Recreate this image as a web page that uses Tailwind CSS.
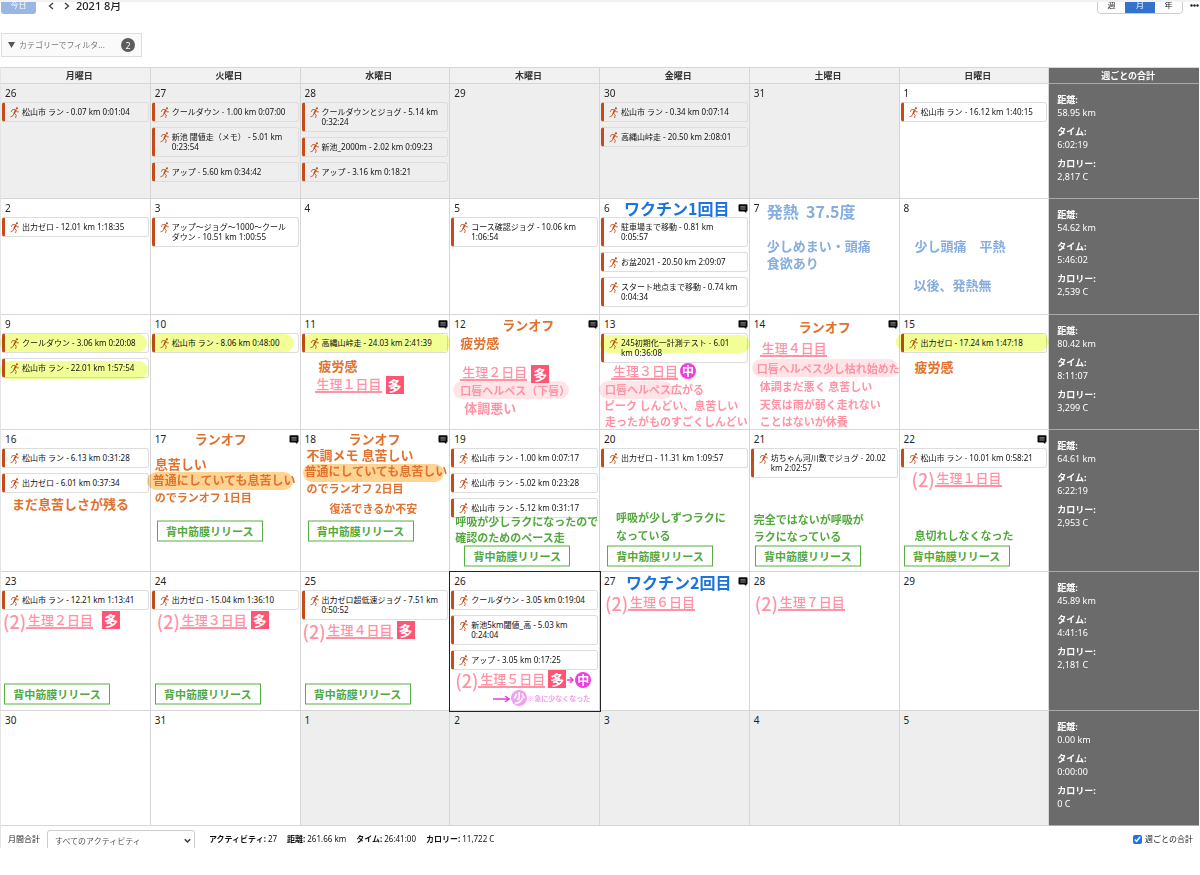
<!DOCTYPE html>
<html lang="ja">
<head>
<meta charset="utf-8">
<meta name="viewport" content="width=device-width, initial-scale=1">
<title>2021 8月 カレンダー</title>
<script src="https://cdn.jsdelivr.net/npm/@tailwindcss/browser@4"></script>
</head>
<body class="bg-white font-['Noto_Sans','Noto_Sans_CJK_JP',sans-serif] text-[8px] text-[#222]">
<svg class="hidden" aria-hidden="true">
  <symbol id="runner" viewBox="0 0 27 34">
    <circle cx="21" cy="4" r="3.4" fill="#c24d1b"/>
    <path d="M17 10L13 19" fill="none" stroke="#c24d1b" stroke-width="5" stroke-linecap="round"/>
    <path d="M15 8H7L4 14M18 10l3 5 5 0M13 20l6 5-2 8M12 20l-3 7-7 3" fill="none" stroke="#c24d1b" stroke-width="2.6" stroke-linecap="round" stroke-linejoin="round"/>
  </symbol>
  <symbol id="memo" viewBox="0 0 30 28">
    <path d="M4 1h22q3 0 3 3v16q0 3-3 3h-1v5l-6-5H4q-3 0-3-3V4q0-3 3-3z" fill="#0a0a0a"/>
    <path d="M7 8h16M7 12h16M7 16h16" stroke="#aaa" stroke-width="2"/>
  </symbol>
</svg>

<header class="flex h-[14px] items-end overflow-hidden border-t-2 border-[#f2f2f2] pl-px">
  <button class="h-[19px] w-[35px] shrink-0 rounded-b-[3px] bg-[#9ab7e4] leading-none text-white">今日</button>
  <button class="ml-3 flex h-[16px] w-[6px] items-center" aria-label="前の月"><svg class="h-2 w-[6px]" viewBox="0 0 6 8" fill="none" stroke="#444" stroke-width="1.4"><path d="M5 1L1.500 4 5 7"/></svg></button>
  <button class="ml-[10px] flex h-[16px] w-[6px] items-center" aria-label="次の月"><svg class="h-2 w-[6px]" viewBox="0 0 6 8" fill="none" stroke="#444" stroke-width="1.4"><path d="M1 1L4.500 4 1 7"/></svg></button>
  <h1 class="ml-1.5 text-[11px] leading-[16px] font-medium">2021 8月</h1>
  <div class="ml-auto flex h-[19px] w-[86px] overflow-hidden rounded-b-[4px] border border-[#ccc] leading-none">
    <button class="flex-1">週</button>
    <button class="w-[30px] bg-[#3472cd] text-white">月</button>
    <button class="flex-1">年</button>
  </div>
  <button class="mr-px ml-[7px] flex h-[18px] w-[9px] items-center" aria-label="その他"><svg class="h-[3px] w-[9px]" viewBox="0 0 9 3" fill="#222"><circle cx="1.500" cy="1.500" r="1.200"/><circle cx="4.500" cy="1.500" r="1.200"/><circle cx="7.500" cy="1.500" r="1.200"/></svg></button>
</header>

<button class="mt-[19px] ml-px flex h-6 w-[141px] items-center border border-[#ddd] bg-[#fafafa] px-[6px] text-[#777]">
  <svg class="mr-1 h-[6px] w-[7px]" viewBox="0 0 7 6"><path d="M0 0h7L3.500 6z" fill="#555"/></svg>
  <span>カテゴリーでフィルタ...</span>
  <span class="ml-auto grid size-[14px] place-items-center rounded-full bg-[#5c5c5c] text-[9px] leading-none text-white">2</span>
</button>

<main class="mt-[10px] border-l border-[#e4e4e4] pr-px">
  <table class="w-full table-fixed border-separate border-spacing-0 border-t border-[#d6d6d6]">
    <thead class="text-[9px] leading-none text-[#333]">
      <tr id="days"></tr>
    </thead>
    <tbody id="weeks"></tbody>
  </table>
  <footer class="flex h-[22px] items-start overflow-hidden pr-[6px] pl-[7px] leading-[26px]">
    <label for="kind">月間合計</label>
    <div class="relative mt-1 ml-[7px]">
      <select id="kind" class="block h-[21px] w-[148px] appearance-none rounded-[3px] border border-[#ccc] bg-white pl-[7px] text-[8px] leading-[18px] text-[#555]"><option>すべてのアクティビティ</option></select>
      <svg class="pointer-events-none absolute top-2 right-1 h-[6px] w-[7px]" viewBox="0 0 7 6" fill="none" stroke="#333" stroke-width="1.400"><path d="M.8 1.200L3.500 4 6.200 1.200"/></svg>
    </div>
    <dl class="ml-[14px] flex gap-[10px] text-[#111]">
      <div class="flex gap-0.5"><dt class="font-bold">アクティビティ:</dt><dd>27</dd></div>
      <div class="flex gap-0.5"><dt class="font-bold">距離:</dt><dd>261.66 km</dd></div>
      <div class="flex gap-0.5"><dt class="font-bold">タイム:</dt><dd>26:41:00</dd></div>
      <div class="flex gap-0.5"><dt class="font-bold">カロリー:</dt><dd>11,722 C</dd></div>
    </dl>
    <label class="ml-auto flex items-center gap-[3px]"><input type="checkbox" checked class="size-[9px] accent-[#1a73e8]">週ごとの合計</label>
  </footer>
</main>

<script>
// Pen styles for the memos written on the calendar.
const pens = {
  blue: 'text-[16px] text-[#1a73e0] font-bold',
  sky: 'text-[16px] text-[#86ade0] font-bold',
  skyS: 'text-[13px] text-[#86ade0] font-bold',
  orange: 'text-[13px] text-[#e0722e] font-bold',
  orangeM: 'text-[12px] text-[#e0722e] font-bold',
  orangeS: 'text-[11px] text-[#e0722e] font-bold',
  green: 'text-[11px] text-[#51a83c] font-bold',
  pink: 'text-[13px] text-[#ff93a5] font-bold',
  pinkS: 'text-[11px] text-[#ff93a5] font-bold',
  line: 'text-[13px] text-[#ff93a5] font-medium border-b-2 border-[#ff93a5] pl-0.5 pb-px',
  box: 'text-[11px] text-[#51a83c] font-bold border border-[#55b040] bg-white py-1 w-[106px] text-center',
  many: 'text-[14px] text-white font-bold bg-[#ff5575] p-0.5',
  mid: 'text-[12px] text-white font-bold bg-[#f03ee0] rounded-full p-0.5',
  few: 'text-[12px] text-white font-bold bg-[#f0a0f0] rounded-full p-0.5',
  tiny: 'text-[7px] text-[#f2a0ee] font-bold',
};
const markers = {
  yellow: 'bg-[#f2ff96]',
  amber: 'bg-[#ffd391]',
  rose: 'bg-[#ffe5e8]',
};
const R = '背中筋膜リリース';
// note: [pen, x, centre y, text]   mark: [marker, x, y, width]
const weeks = [
 { h: 'h-[115px]', sum: ['58.95 km','6:02:19','2,817 C'], days: [
  { n:26, off:1, a:['松山市 ラン - 0.07 km 0:01:04'] },
  { n:27, off:1, a:['クールダウン - 1.00 km 0:07:00','新池 閾値走（メモ） - 5.01 km 0:23:54','アップ - 5.60 km 0:34:42'] },
  { n:28, off:1, a:['クールダウンとジョグ - 5.14 km 0:32:24','新池_2000m - 2.02 km 0:09:23','アップ - 3.16 km 0:18:21'] },
  { n:29, off:1 },
  { n:30, off:1, a:['松山市 ラン - 0.34 km 0:07:14','高縄山峠走 - 20.50 km 2:08:01'] },
  { n:31, off:1 },
  { n:1, a:['松山市 ラン - 16.12 km 1:40:15'] } ] },
 { h: 'h-[116px]', sum: ['54.62 km','5:46:02','2,539 C'], days: [
  { n:2, a:['出力ゼロ - 12.01 km 1:18:35'] },
  { n:3, a:['アップ〜ジョグ〜1000〜クールダウン - 10.51 km 1:00:55'] },
  { n:4 },
  { n:5, a:['コース確認ジョグ - 10.06 km 1:06:54'] },
  { n:6, memo:1, a:['駐車場まで移動 - 0.81 km 0:05:57','お盆2021 - 20.50 km 2:09:07','スタート地点まで移動 - 0.74 km 0:04:34'], t:[['blue',24,9,'ワクチン1回目']] },
  { n:7, t:[['sky',17,12,'発熱\u00a0 37.5度'],['skyS',17,46,'少しめまい・頭痛'],['skyS',17,63,'食欲あり']] },
  { n:8, t:[['skyS',15,46,'少し頭痛　平熱'],['skyS',14,85,'以後、発熱無']] } ] },
 { h: 'h-[115px]', sum: ['80.42 km','8:11:07','3,299 C'], days: [
  { n:9, a:['クールダウン - 3.06 km 0:20:08','松山市 ラン - 22.01 km 1:57:54'], m:[['yellow',-1,19,147],['yellow',-1,46,148]] },
  { n:10, a:['松山市 ラン - 8.06 km 0:48:00'], m:[['yellow',-1,19,144]] },
  { n:11, memo:1, a:['高縄山峠走 - 24.03 km 2:41:39'], m:[['yellow',1,19,149]], t:[['orange',18,50,'疲労感'],['line',14,70,'生理１日目'],['many',85,70,'多']] },
  { n:12, memo:1, m:[['rose',3,66,116]], t:[['orange',52,9,'ランオフ'],['orange',10,27,'疲労感'],['line',10,58,'生理２日目'],['many',81,59,'多'],['pinkS',10,75,'口唇ヘルペス（下唇）'],['pink',14,92,'体調悪い']] },
  { n:13, memo:1, a:['245初期化一計測テスト - 6.01 km 0:36:08'], m:[['yellow',0,20,150],['rose',-1,66,74]], t:[['line',11,57,'生理３日目'],['mid',80,56,'中'],['pinkS',5,74,'口唇ヘルペス広がる'],['pinkS',4,90,'ピーク しんどい、息苦しい'],['pinkS',5,106,'走ったがものすごくしんどい']] },
  { n:14, memo:1, m:[['rose',2,44,146]], t:[['orange',49,11,'ランオフ'],['line',10,34,'生理４日目'],['pinkS',7,53,'口唇ヘルペス少し枯れ始めた'],['pinkS',10,71,'体調まだ悪く 息苦しい'],['pinkS',10,89,'天気は雨が弱く走れない'],['pinkS',10,106,'ことはないが休養']] },
  { n:15, a:['出力ゼロ - 17.24 km 1:47:18'], m:[['yellow',-4,18,153]], t:[['orange',15,51,'疲労感']] } ] },
 { h: 'h-[142px]', sum: ['64.61 km','6:22:19','2,953 C'], days: [
  { n:16, a:['松山市 ラン - 6.13 km 0:31:28','出力ゼロ - 6.01 km 0:37:34'], t:[['orange',11,73,'まだ息苦しさが残る']] },
  { n:17, memo:1, m:[['amber',-4,42,146]], t:[['orange',44,8,'ランオフ'],['orange',4,33,'息苦しい'],['orangeM',2,50,'普通にしていても息苦しい'],['orangeS',4,67,'のでランオフ 1日目'],['box',6,101,R]] },
  { n:18, memo:1, m:[['amber',2,34,141]], t:[['orange',48,8,'ランオフ'],['orange',6,24,'不調メモ 息苦しい'],['orangeM',4,41,'普通にしていても息苦しい'],['orangeS',6,58,'のでランオフ 2日目'],['orangeS',29,78,'復活できるか不安'],['box',7,101,R]] },
  { n:19, a:['松山市 ラン - 1.00 km 0:07:17','松山市 ラン - 5.02 km 0:23:28','松山市 ラン - 5.12 km 0:31:17'], t:[['green',5,91,'呼吸が少しラクになったので'],['green',5,107,'確認のためのペース走'],['box',14,126,R]] },
  { n:20, a:['出力ゼロ - 11.31 km 1:09:57'], t:[['green',16,87,'呼吸が少しずつラクに'],['green',16,105,'なっている'],['box',7,126,R]] },
  { n:21, a:['坊ちゃん河川敷でジョグ - 20.02 km 2:02:57'], t:[['green',4,89,'完全ではないが呼吸が'],['green',4,106,'ラクになっている'],['box',5,126,R]] },
  { n:22, memo:1, a:['松山市 ラン - 10.01 km 0:58:21'], t:[['sub',12,49,'生理１日目'],['green',15,105,'息切れしなくなった'],['box',4,126,R]] } ] },
 { h: 'h-[139px]', sum: ['45.89 km','4:41:16','2,181 C'], days: [
  { n:23, a:['松山市 ラン - 12.21 km 1:13:41'], t:[['sub',2,49,'生理２日目'],['many',101,48,'多'],['box',3,122,R]] },
  { n:24, a:['出力ゼロ - 15.04 km 1:36:10'], t:[['sub',6,49,'生理３日目'],['many',100,48,'多'],['box',4,122,R]] },
  { n:25, a:['出力ゼロ超低速ジョグ - 7.51 km 0:50:52'], t:[['sub',2,59,'生理４日目'],['many',96,58,'多'],['box',4,122,R]] },
  { n:26, today:1, a:['クールダウン - 3.05 km 0:19:04','新池5km閾値_高 - 5.03 km 0:24:04','アップ - 3.05 km 0:17:25'], t:[['sub',5,108,'生理５日目'],['many',98,107,'多'],['arrowS',117,108,''],['mid',125,108,'中'],['arrowL',43,127,''],['few',61,126,'少'],['tiny',77,126,'※急に少なくなった']] },
  { n:27, memo:1, t:[['blue',26,10,'ワクチン2回目'],['sub',5,31,'生理６日目']] },
  { n:28, t:[['sub',5,31,'生理７日目']] },
  { n:29 } ] },
 { h: 'h-[115px]', sum: ['0.00 km','0:00:00','0 C'], days: [
  { n:30 }, { n:31 }, { n:1, off:1 }, { n:2, off:1 }, { n:3, off:1 }, { n:4, off:1 }, { n:5, off:1 } ] },
];

const activity = (text) => `<li><a href="#" class="flex rounded-[3px] border border-l-3 border-[#ddd] border-l-[#c24d1b] py-1 pr-[7px] pl-[5px] leading-[10px]"><svg class="-mb-px mr-[3px] h-[11px] w-[9px] shrink-0" aria-hidden="true"><use href="#runner"/></svg><span>${text}</span></a></li>`;
const mark = ([pen, x, y, w]) => `<span class="pointer-events-none absolute h-[18px] rounded-full mix-blend-multiply ${markers[pen]}" style="left:${x}px;top:${y}px;width:${w}px"></span>`;
const note = ([pen, x, y, text]) => {
  const at = `style="left:${x}px;top:${y}px"`;
  if (pen === 'sub') return `<p class="absolute flex -translate-y-1/2 items-center font-['Noto_Sans_CJK_JP',sans-serif] leading-none whitespace-nowrap" ${at}><span class="text-[18px] font-medium text-[#ff93a5]">(2)</span><span class="${pens.line}">${text}</span></p>`;
  if (pen === 'arrowS') return `<svg class="absolute h-[7px] w-[7px] -translate-y-1/2" ${at} viewBox="0 0 7 7" fill="none" stroke="#e83edc" stroke-width="1.500"><path d="M0 3.500H6M3 .5L6 3.500 3 6.500"/></svg>`;
  if (pen === 'arrowL') return `<svg class="absolute h-[7px] w-[17px] -translate-y-1/2" ${at} viewBox="0 0 17 7" fill="none" stroke="#e83edc" stroke-width="1.500"><path d="M0 3.500H16M12 .5L16 3.500 12 6.500"/></svg>`;
  return `<p class="absolute -translate-y-1/2 font-['Noto_Sans_CJK_JP',sans-serif] leading-none whitespace-nowrap ${pens[pen]}" ${at}>${text}</p>`;
};
const day = (d) => `<td class="relative border-r border-b border-[#d6d6d6] p-0 align-top ${d.off ? 'bg-[#eee]' : 'bg-white'} ${d.today ? 'outline-1 outline-[#222] z-10' : ''}">
  <div class="flex h-[18px] items-center justify-between pr-px pl-1 text-[10px] leading-none"><time>${d.n}</time>${d.memo ? '<svg class="h-[9px] w-[10px]" role="img" aria-label="メモ"><use href="#memo"/></svg>' : ''}</div>
  <ul class="flex flex-col gap-[5px] pr-px pl-px text-[#111]">${(d.a || []).map(activity).join('')}</ul>
  ${(d.m || []).map(mark).join('')}${(d.t || []).map(note).join('')}</td>`;
const total = (s) => `<td class="border-b border-[#aaa] bg-[#6b6b6b] p-0 align-top text-[9px] text-white"><dl class="pt-[9px] pl-[8px] leading-[13px]">${['距離:','タイム:','カロリー:'].map((k, i) => `<div class="mb-1.5"><dt class="font-bold">${k}</dt><dd>${s[i]}</dd></div>`).join('')}</dl></td>`;

document.getElementById('days').innerHTML =
  ['月','火','水','木','金','土','日'].map((d) => `<th scope="col" class="h-4 border-r border-b border-[#d6d6d6] bg-[#f1f1f1] p-0 pl-2">${d}曜日</th>`).join('') +
  '<th scope="col" class="h-4 border-b border-[#aaa] bg-[#6b6b6b] p-0 pl-2 text-white">週ごとの合計</th>';
document.getElementById('weeks').innerHTML =
  weeks.map((w) => `<tr class="${w.h}">${w.days.map(day).join('')}${total(w.sum)}</tr>`).join('');
</script>
</body>
</html>
